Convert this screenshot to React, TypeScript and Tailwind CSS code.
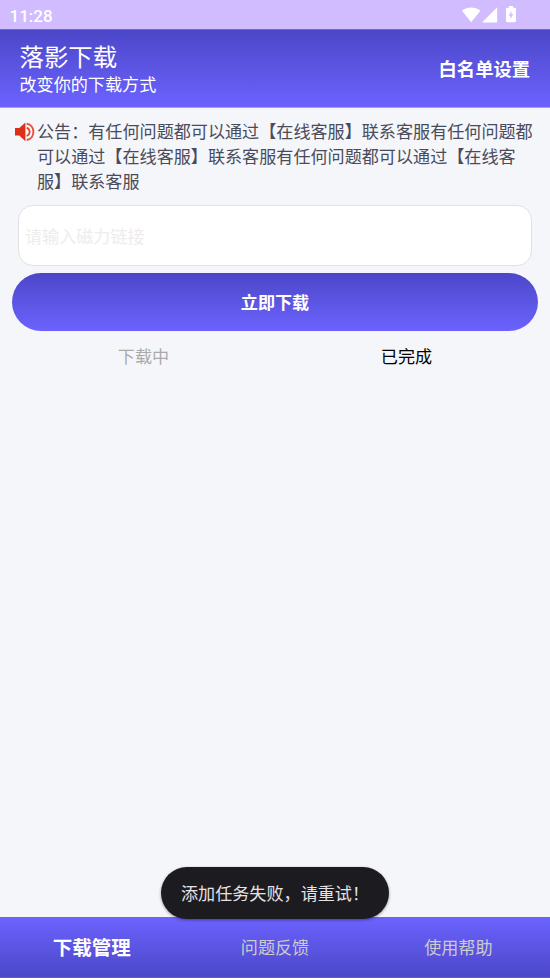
const notice =
  "公告：有任何问题都可以通过【在线客服】联系客服有任何问题都可以通过【在线客服】联系客服有任何问题都可以通过【在线客服】联系客服"

function StatusBar() {
  return (
    <div className="flex h-[29px] shrink-0 items-center justify-between bg-[#d0bcff] pl-[9.5px] pr-[34px] text-white">
      <span className="pt-[3px] font-['Roboto',sans-serif] text-[17px] font-medium leading-none">
        11:28
      </span>
      <div className="flex items-center">
        <svg width="20" height="16" viewBox="0 0 20 16" fill="currentColor">
          <path d="M0 3.8C5.5 -.6 13-.6 18.4 3.8L9.2 15.3Z" />
        </svg>
        <svg width="16" height="16" viewBox="0 0 16 16" fill="currentColor">
          <path d="M15.2.2V15.6H0Z" />
        </svg>
        <svg width="10" height="17" viewBox="0 0 10 17" className="ml-2">
          <path
            d="M3 0h4v1.8h1.8c.7 0 1.2.5 1.2 1.2v12c0 .7-.5 1.2-1.2 1.2H1.2C.5 16.2 0 15.7 0 15V3c0-.7.5-1.2 1.2-1.2H3Z"
            fill="currentColor"
          />
          <path d="M5.4 4.7v3.4h1.8L4.5 13.3V9.7H2.8Z" fill="#d0bcff" />
        </svg>
      </div>
    </div>
  )
}

function SpeakerIcon() {
  return (
    <svg width="20" height="20" viewBox="0 0 20 20" fill="none" className="mt-1 shrink-0">
      <path d="M0 6h4.3L10.4.4v18.9L4.3 13.6H0Z" fill="#dc3018" />
      <path d="M11.6 5.8c4 .8 4 7.3 0 8.1" stroke="#e8432b" strokeWidth="1.7" />
      <path d="M11.7 1.7c8.9 1.4 8.9 14.9 0 16.3" stroke="#e8533c" strokeWidth="1.9" />
    </svg>
  )
}

export default function App() {
  return (
    <div className="relative flex h-[978px] w-[550px] flex-col overflow-hidden bg-[#f5f6fa] font-['Noto_Sans_CJK_SC',sans-serif] text-[17.1px] leading-[25px]">
      <StatusBar />

      <header className="flex h-[79px] shrink-0 items-center justify-between border-b border-t border-b-[#a5a0fd] border-t-[#6e67d0] bg-linear-to-b from-[#4b47c8] to-[#6c63ff] pl-[19.5px] pr-5 text-white">
        <div>
          <h1 className="text-[24.4px] leading-[30px]">落影下载</h1>
          <p>改变你的下载方式</p>
        </div>
        <button type="button" className="text-[18.3px] font-bold">
          白名单设置
        </button>
      </header>

      <main className="flex flex-1 flex-col">
        <div className="mt-[10px] flex pl-[15px] pr-3">
          <SpeakerIcon />
          <p className="ml-[2px] w-[500px] text-[#494b5b]">{notice}</p>
        </div>

        <input
          type="text"
          placeholder="请输入磁力链接"
          className="mx-[18px] mt-3 h-[61px] rounded-[15px] border-[1.5px] border-[#e1e1e3] bg-white px-[6px] outline-none placeholder:text-[#eeecec]"
        />
        <button
          type="button"
          className="mx-3 mt-[7px] h-[58px] rounded-full bg-linear-to-b from-[#4b47c8] to-[#6c63ff] pb-[2px] font-bold text-white"
        >
          立即下载
        </button>

        <div className="mx-3 mt-3 grid grid-cols-2 text-center">
          <span className="text-[#aaaaaa]">下载中</span>
          <span className="text-black">已完成</span>
        </div>
      </main>

      <nav className="grid h-[61px] shrink-0 grid-cols-3 items-center border-b border-[#6b6b78] bg-linear-to-b from-[#6c63ff] to-[#4b47c8] pb-[2px] text-center text-[#cccccc]">
        <span className="text-[19.5px] font-bold text-white">下载管理</span>
        <span>问题反馈</span>
        <span>使用帮助</span>
      </nav>

      <div
        role="alert"
        className="absolute left-[161px] top-[867px] flex h-[52px] w-[228px] items-center rounded-full bg-[#1c1b20] pb-[2px] pl-5 text-[#e6e1e5] shadow-[0_1px_3px_rgba(0,0,0,0.4)]"
      >
        添加任务失败，请重试！
      </div>
    </div>
  )
}
